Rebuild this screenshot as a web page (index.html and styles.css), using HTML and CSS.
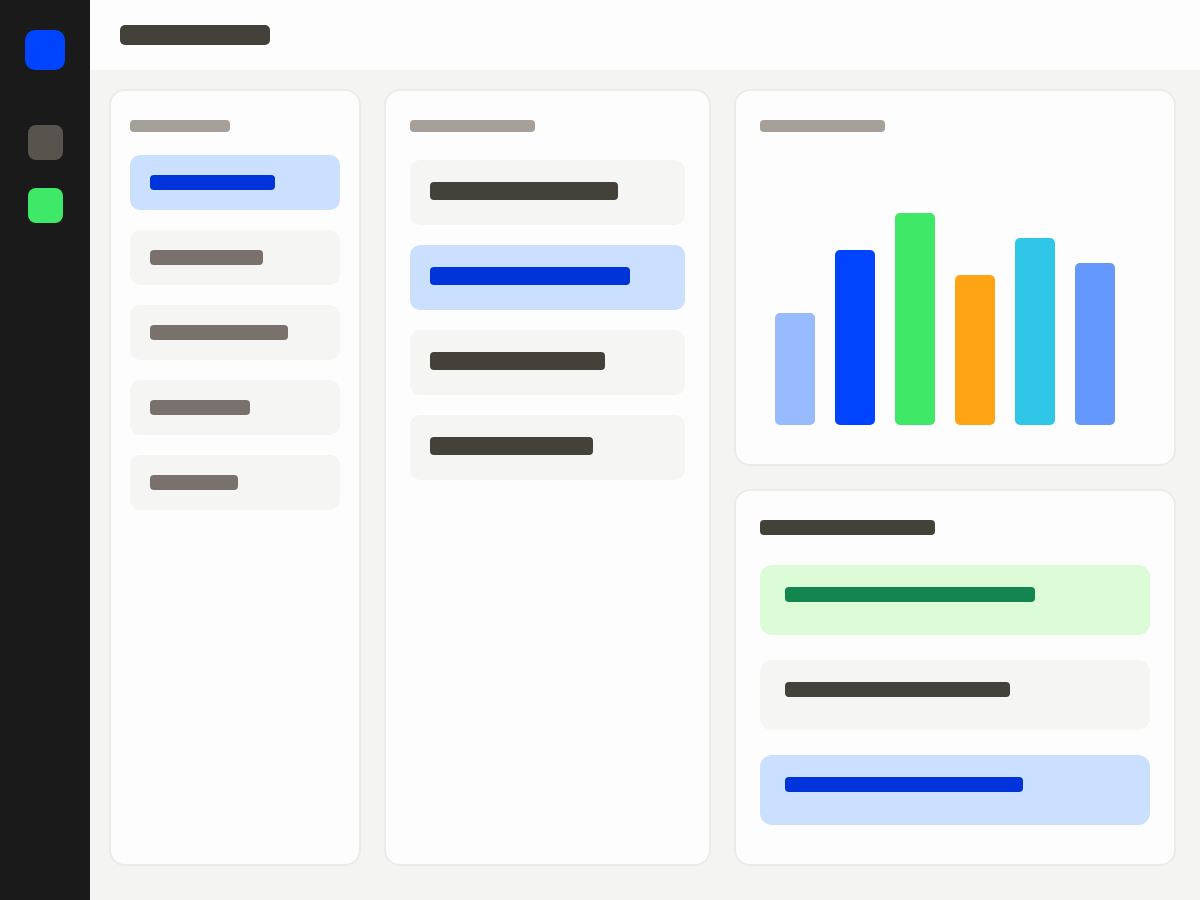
FILE: index.html
```html
<!DOCTYPE html>
<html lang="en">
<head>
  <meta charset="UTF-8" />
  <meta name="viewport" content="width=device-width, initial-scale=1.0"/>
  <title>Dashboard Skeleton</title>
  <link rel="stylesheet" href="styles.css">
</head>
<body>

  <nav class="sidebar">
    <a class="logo" href="#" aria-label="Home"></a>
    <div class="nav-links">
      <a class="nav-link" href="#" aria-label="Overview"></a>
      <a class="nav-link active" href="#" aria-label="Reports"></a>
    </div>
  </nav>

  <div class="page">
    <header class="topbar">
      <div class="line line-title"></div>
    </header>

    <main class="board">
      <section class="card card-narrow">
        <div class="line line-label w-100"></div>
        <ul class="list">
          <li class="item blue"><div class="line w-125"></div></li>
          <li class="item"><div class="line w-113"></div></li>
          <li class="item"><div class="line w-138"></div></li>
          <li class="item"><div class="line w-100"></div></li>
          <li class="item"><div class="line w-88"></div></li>
        </ul>
      </section>

      <section class="card card-medium">
        <div class="line line-label w-125"></div>
        <ul class="list list-medium">
          <li class="item"><div class="line w-188"></div></li>
          <li class="item blue"><div class="line w-200"></div></li>
          <li class="item"><div class="line w-175"></div></li>
          <li class="item"><div class="line w-163"></div></li>
        </ul>
      </section>

      <div class="column">
        <section class="card card-chart">
          <div class="line line-label w-125"></div>
          <div class="chart">
            <div class="bar bar-sky" style="height: 45%"></div>
            <div class="bar bar-blue" style="height: 70%"></div>
            <div class="bar bar-green" style="height: 85%"></div>
            <div class="bar bar-orange" style="height: 60%"></div>
            <div class="bar bar-cyan" style="height: 75%"></div>
            <div class="bar bar-indigo" style="height: 65%"></div>
          </div>
        </section>

        <section class="card card-large">
          <div class="line line-heading w-175"></div>
          <ul class="list list-large">
            <li class="item green"><div class="line w-250"></div></li>
            <li class="item"><div class="line w-225"></div></li>
            <li class="item blue"><div class="line w-238"></div></li>
          </ul>
        </section>
      </div>
    </main>
  </div>

</body>
</html>
```
FILE: styles.css
```css
* {
  box-sizing: border-box;
}

body {
  margin: 0;
  min-height: 100vh;
  display: flex;
  background: #f4f4f2;
  font-family: "Liberation Sans", sans-serif;
}

/* Sidebar */
.sidebar {
  flex: 0 0 90px;
  display: flex;
  flex-direction: column;
  align-items: center;
  gap: 55px;
  padding-top: 30px;
  background: #1a1a1a;
}

.logo {
  width: 40px;
  height: 40px;
  border-radius: 10px;
  background: #0044ff;
}

.nav-links {
  display: flex;
  flex-direction: column;
  gap: 28px;
}

.nav-link {
  width: 35px;
  height: 35px;
  border-radius: 8px;
  background: #57534d;
}

.nav-link.active {
  background: #3fe867;
}

/* Page */
.page {
  flex: 1;
  display: flex;
  flex-direction: column;
}

.topbar {
  height: 70px;
  display: flex;
  align-items: center;
  padding: 0 30px;
  background: #fdfdfd;
}

.board {
  flex: 1;
  display: grid;
  grid-template-columns: 252fr 327fr 442fr;
  gap: 23px;
  padding: 19px 24px 34px 19px;
}

.column {
  display: grid;
  grid-template-rows: 1fr 1fr;
  gap: 23px;
}

.card {
  display: flex;
  flex-direction: column;
  padding: 29px 24px;
  border: 2px solid #ebebe9;
  border-radius: 16px;
  background: #fdfdfd;
}

.card-narrow {
  padding: 29px 19px;
}

/* Placeholder lines */
.line {
  height: 15px;
  max-width: 100%;
  border-radius: 4px;
  background: #44403a;
}

.line-title {
  width: 150px;
  height: 20px;
  border-radius: 5px;
}

.line-label {
  height: 12px;
  background: #a6a09b;
}

.w-88 { width: 88px; }
.w-100 { width: 100px; }
.w-113 { width: 113px; }
.w-125 { width: 125px; }
.w-138 { width: 138px; }
.w-163 { width: 163px; }
.w-175 { width: 175px; }
.w-188 { width: 188px; }
.w-200 { width: 200px; }
.w-225 { width: 225px; }
.w-238 { width: 238px; }
.w-250 { width: 250px; }

/* Lists */
.list {
  list-style: none;
  margin: 23px 0 0;
  padding: 0;
  display: flex;
  flex-direction: column;
  gap: 20px;
}

.item {
  padding: 20px;
  border-radius: 10px;
  background: #f5f5f3;
}

.card-narrow .item .line {
  background: #79716b;
}

.list-medium {
  margin-top: 28px;
}

.list-medium .item {
  padding: 22px 20px 25px;
}

.list-medium .line {
  height: 18px;
}

.list-large {
  margin-top: 30px;
  gap: 25px;
}

.list-large .item {
  padding: 22px 25px 33px;
  border-radius: 12px;
}

.item.blue {
  background: #cbdfff;
}

.list .item.blue .line {
  background: #0033d9;
}

.item.green {
  background: #dcfcd8;
}

.item.green .line {
  background: #13854e;
}

/* Chart */
.card-chart {
  padding-bottom: 39px;
}

.chart {
  height: 250px;
  margin-top: auto;
  padding: 0 35px 0 15px;
  display: flex;
  align-items: flex-end;
  gap: 20px;
}

.bar {
  flex: 1;
  border-radius: 5px;
}

.bar-sky { background: #98bbff; }
.bar-blue { background: #0044ff; }
.bar-green { background: #3fe867; }
.bar-orange { background: #ffa515; }
.bar-cyan { background: #30c6e8; }
.bar-indigo { background: #6598ff; }
```
